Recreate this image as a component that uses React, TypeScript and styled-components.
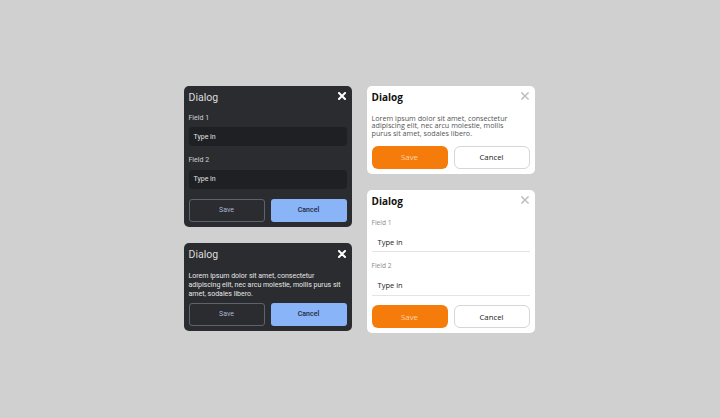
import styled, { createGlobalStyle } from "styled-components";

const GlobalStyle = createGlobalStyle`
  html, body {
    margin: 0;
    padding: 0;
    background: #d0d0d0;
  }
  #root {
    height: 418px;
  }
`;

const Page = styled.div`
  height: 418px;
  display: flex;
  align-items: center;
  justify-content: center;
`;

const Columns = styled.div`
  display: flex;
  gap: 15px;
  margin: 1px 2px 0 0;
`;

const Column = styled.div`
  display: flex;
  flex-direction: column;
  gap: 16px;
  width: 168px;
`;

// --- diálogo escuro (Roboto) e claro ---
const DarkBox = styled.div`
  background: #2b2c30;
  border-radius: 5px;
  padding: 5px 5px 5.5px;
  box-sizing: border-box;
  font-family: Roboto, "Liberation Sans", sans-serif;
  color: #e2e2e2;
`;

const LightBox = styled.div`
  background: #ffffff;
  border-radius: 5px;
  padding: 5px;
  box-sizing: border-box;
  font-family: "Open Sans", "DejaVu Sans", sans-serif;
  color: #111;
`;

const Header = styled.div`
  height: 13px;
  display: flex;
  align-items: center;
  justify-content: space-between;
`;

const DarkTitle = styled.div`
  font-size: 10.5px;
  color: #dcdcdc;
`;

const LightTitle = styled.div`
  font-size: 10px;
  font-weight: 700;
  color: #111;
`;

const CloseButton = styled.div<{ $light?: boolean }>`
  width: 9px;
  height: 9px;
  display: flex;
  align-items: center;
  justify-content: center;
  margin-top: -2px;
  margin-right: ${(p) => (p.$light ? "0.5px" : "0")};
`;

const Label = styled.div<{ $light?: boolean; $top: number }>`
  font-size: ${(p) => (p.$light ? "6.6px" : "7px")};
  line-height: 9px;
  color: ${(p) => (p.$light ? "#8c8c8c" : "#d0d0d0")};
  margin-top: ${(p) => p.$top}px;
`;

const DarkInput = styled.div`
  margin-top: 4.5px;
  height: 19px;
  border-radius: 4px;
  background: #1f2023;
  display: flex;
  align-items: center;
  padding-left: 5px;
  font-size: 7px;
  color: #e0e0e0;
`;

const LightInput = styled.div`
  margin-top: 5.5px;
  height: 19px;
  border-bottom: 1px solid #e4e4e4;
  display: flex;
  align-items: center;
  padding-left: 6px;
  font-size: 7.5px;
  color: #222;
`;

const Lorem = styled.p<{ $light?: boolean }>`
  margin: ${(p) => (p.$light ? "11px" : "10.8px")} 0 0;
  font-size: ${(p) => (p.$light ? "7.2px" : "7px")};
  line-height: ${(p) => (p.$light ? "7.6px" : "9px")};
  max-width: ${(p) => (p.$light ? "146px" : "none")};
  color: ${(p) => (p.$light ? "#555" : "#e6e6e6")};
`;

const Actions = styled.div<{ $top: number }>`
  display: grid;
  grid-template-columns: 1fr 1fr;
  gap: 6px;
  margin-top: ${(p) => p.$top}px;
`;

type Variant = "darkSave" | "darkCancel" | "lightSave" | "lightCancel";

const Button = styled.div<{ $variant: Variant }>`
  height: 23px;
  box-sizing: border-box;
  display: flex;
  align-items: center;
  justify-content: center;
  font-size: 7px;
  border-radius: ${(p) => (p.$variant.startsWith("light") ? "6px" : "3px")};
  ${(p) =>
    p.$variant === "darkSave" &&
    `border: 1px solid #5d636e; color: #a6b4cf; background: transparent;`}
  ${(p) =>
    p.$variant === "darkCancel" &&
    `background: #8ab4f8; color: #1e2838; font-weight: 500;`}
  ${(p) =>
    p.$variant === "lightSave" &&
    `background: #f57c0a; color: #fcd3ad; font-size: 7.8px;`}
  ${(p) =>
    p.$variant === "lightCancel" &&
    `border: 1px solid #d6d6d6; color: #222; background: #fff; font-size: 7.8px;`}
`;

const LOREM =
  "Lorem ipsum dolor sit amet, consectetur adipiscing elit, nec arcu molestie, mollis purus sit amet, sodales libero.";

function CloseIcon({ light }: { light?: boolean }) {
  return (
    <CloseButton $light={light}>
      <svg width="8" height="8" viewBox="0 0 8 8">
        <path
          d="M1 1 L7 7 M7 1 L1 7"
          stroke={light ? "#c2c2c2" : "#ffffff"}
          strokeWidth={light ? 1.6 : 2}
          strokeLinecap="square"
        />
      </svg>
    </CloseButton>
  );
}

export default function App() {
  return (
    <>
      <GlobalStyle />
      <Page>
        <Columns>
          <Column>
            <DarkBox>
              <Header>
                <DarkTitle>Dialog</DarkTitle>
                <CloseIcon />
              </Header>
              <Label $top={10}>Field 1</Label>
              <DarkInput>Type in</DarkInput>
              <Label $top={10}>Field 2</Label>
              <DarkInput>Type in</DarkInput>
              <Actions $top={10}>
                <Button $variant="darkSave">Save</Button>
                <Button $variant="darkCancel">Cancel</Button>
              </Actions>
            </DarkBox>
            <DarkBox>
              <Header>
                <DarkTitle>Dialog</DarkTitle>
                <CloseIcon />
              </Header>
              <Lorem>{LOREM}</Lorem>
              <Actions $top={3.7}>
                <Button $variant="darkSave">Save</Button>
                <Button $variant="darkCancel">Cancel</Button>
              </Actions>
            </DarkBox>
          </Column>
          <Column>
            <LightBox>
              <Header>
                <LightTitle>Dialog</LightTitle>
                <CloseIcon light />
              </Header>
              <Lorem $light>{LOREM}</Lorem>
              <Actions $top={8.5}>
                <Button $variant="lightSave">Save</Button>
                <Button $variant="lightCancel">Cancel</Button>
              </Actions>
            </LightBox>
            <LightBox>
              <Header>
                <LightTitle>Dialog</LightTitle>
                <CloseIcon light />
              </Header>
              <Label $light $top={10}>Field 1</Label>
              <LightInput>Type in</LightInput>
              <Label $light $top={9}>Field 2</Label>
              <LightInput>Type in</LightInput>
              <Actions $top={9.5}>
                <Button $variant="lightSave">Save</Button>
                <Button $variant="lightCancel">Cancel</Button>
              </Actions>
            </LightBox>
          </Column>
        </Columns>
      </Page>
    </>
  );
}
